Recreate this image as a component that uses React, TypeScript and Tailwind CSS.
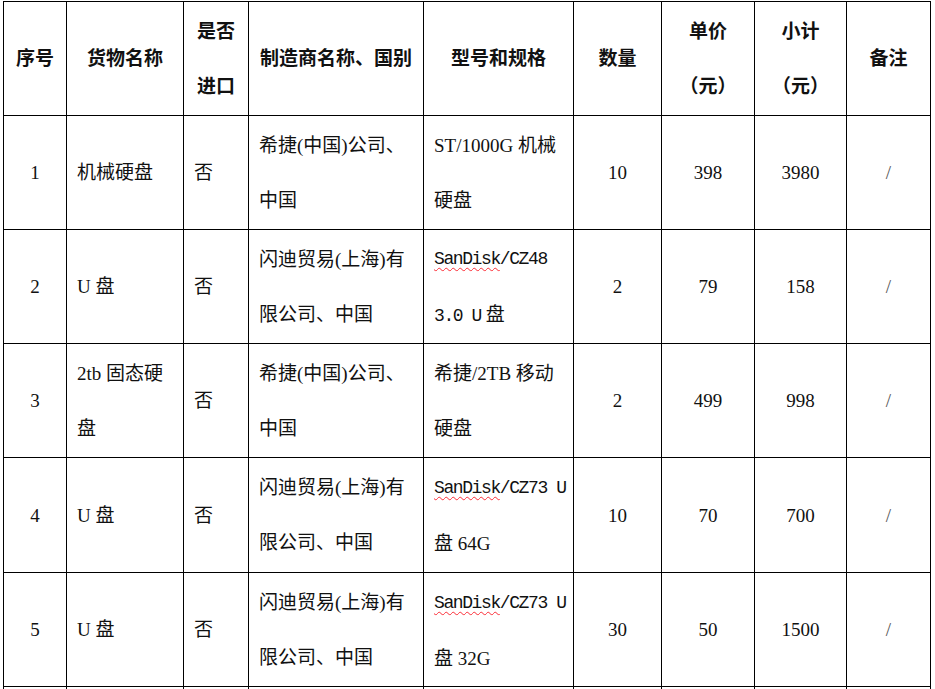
import React from 'react';

const SERIF = "font-['Liberation_Serif','Noto_Sans_CJK_SC',serif]";

type Align = 'center' | 'left';

interface Row {
  no: string;
  name: React.ReactNode;
  imported: string;
  maker: React.ReactNode;
  model: React.ReactNode;
  qty: string;
  price: string;
  total: string;
}

const SanDisk = () => (
  <span className="underline decoration-wavy decoration-red-500 decoration-1 underline-offset-[3px]">SanDisk</span>
);

const Mono: React.FC<{ children: React.ReactNode }> = ({ children }) => (
  <span className="font-['Liberation_Mono',monospace] text-[18px] tracking-[-1.4px]">{children}</span>
);

const sdMaker = (
  <>
    闪迪贸易(上海)有
    <br />
    限公司、中国
  </>
);

const xjMaker = (
  <>
    希捷(中国)公司、
    <br />
    中国
  </>
);

const rows: Row[] = [
  {
    no: '1',
    name: '机械硬盘',
    imported: '否',
    maker: xjMaker,
    model: (
      <>
        ST/1000G 机械
        <br />
        硬盘
      </>
    ),
    qty: '10',
    price: '398',
    total: '3980',
  },
  {
    no: '2',
    name: 'U 盘',
    imported: '否',
    maker: sdMaker,
    model: (
      <>
        <Mono>
          <SanDisk />
          /CZ48
        </Mono>
        <br />
        <Mono>3.0 U</Mono> 盘
      </>
    ),
    qty: '2',
    price: '79',
    total: '158',
  },
  {
    no: '3',
    name: (
      <>
        2tb 固态硬
        <br />盘
      </>
    ),
    imported: '否',
    maker: xjMaker,
    model: (
      <>
        希捷/2TB 移动
        <br />
        硬盘
      </>
    ),
    qty: '2',
    price: '499',
    total: '998',
  },
  {
    no: '4',
    name: 'U 盘',
    imported: '否',
    maker: sdMaker,
    model: (
      <>
        <Mono>
          <SanDisk />
          /CZ73 U
        </Mono>
        <br />盘 64G
      </>
    ),
    qty: '10',
    price: '70',
    total: '700',
  },
  {
    no: '5',
    name: 'U 盘',
    imported: '否',
    maker: sdMaker,
    model: (
      <>
        <Mono>
          <SanDisk />
          /CZ73 U
        </Mono>
        <br />盘 32G
      </>
    ),
    qty: '30',
    price: '50',
    total: '1500',
  },
];

const Cell: React.FC<{ align?: Align; bold?: boolean; children?: React.ReactNode }> = ({
  align = 'center',
  bold,
  children,
}) => (
  <div
    className={`bg-white flex items-center whitespace-nowrap text-[19px] leading-[55px] text-[#111] ${
      align === 'center' ? 'justify-center text-center' : 'justify-start pl-[10px]'
    } ${bold ? 'font-bold' : 'font-normal'}`}
  >
    <div>{children}</div>
  </div>
);

export default function App() {
  return (
    <div className={`w-[935px] h-[689px] overflow-hidden bg-white pt-px pl-[3px] ${SERIF}`}>
      <div className="grid grid-cols-[62px_116px_64px_174px_149px_87px_92px_91px_83px] grid-rows-[113px_113px_113px_113px_114px_113px_113px_40px] gap-px bg-black p-px w-max">
        <Cell bold>序号</Cell>
        <Cell bold>货物名称</Cell>
        <Cell bold>
          是否
          <br />
          进口
        </Cell>
        <Cell bold>制造商名称、国别</Cell>
        <Cell bold>型号和规格</Cell>
        <Cell bold>数量</Cell>
        <Cell bold>
          单价
          <br />
          （元）
        </Cell>
        <Cell bold>
          小计
          <br />
          （元）
        </Cell>
        <Cell bold>备注</Cell>

        {rows.map((r) => (
          <React.Fragment key={r.no}>
            <Cell>{r.no}</Cell>
            <Cell align="left">{r.name}</Cell>
            <Cell align="left">{r.imported}</Cell>
            <Cell align="left">{r.maker}</Cell>
            <Cell align="left">{r.model}</Cell>
            <Cell>{r.qty}</Cell>
            <Cell>{r.price}</Cell>
            <Cell>{r.total}</Cell>
            <Cell>
              <span className="text-[#555]">/</span>
            </Cell>
          </React.Fragment>
        ))}

        {Array.from({ length: 9 }).map((_, i) => (
          <Cell key={`tail-${i}`} />
        ))}
      </div>
    </div>
  );
}
